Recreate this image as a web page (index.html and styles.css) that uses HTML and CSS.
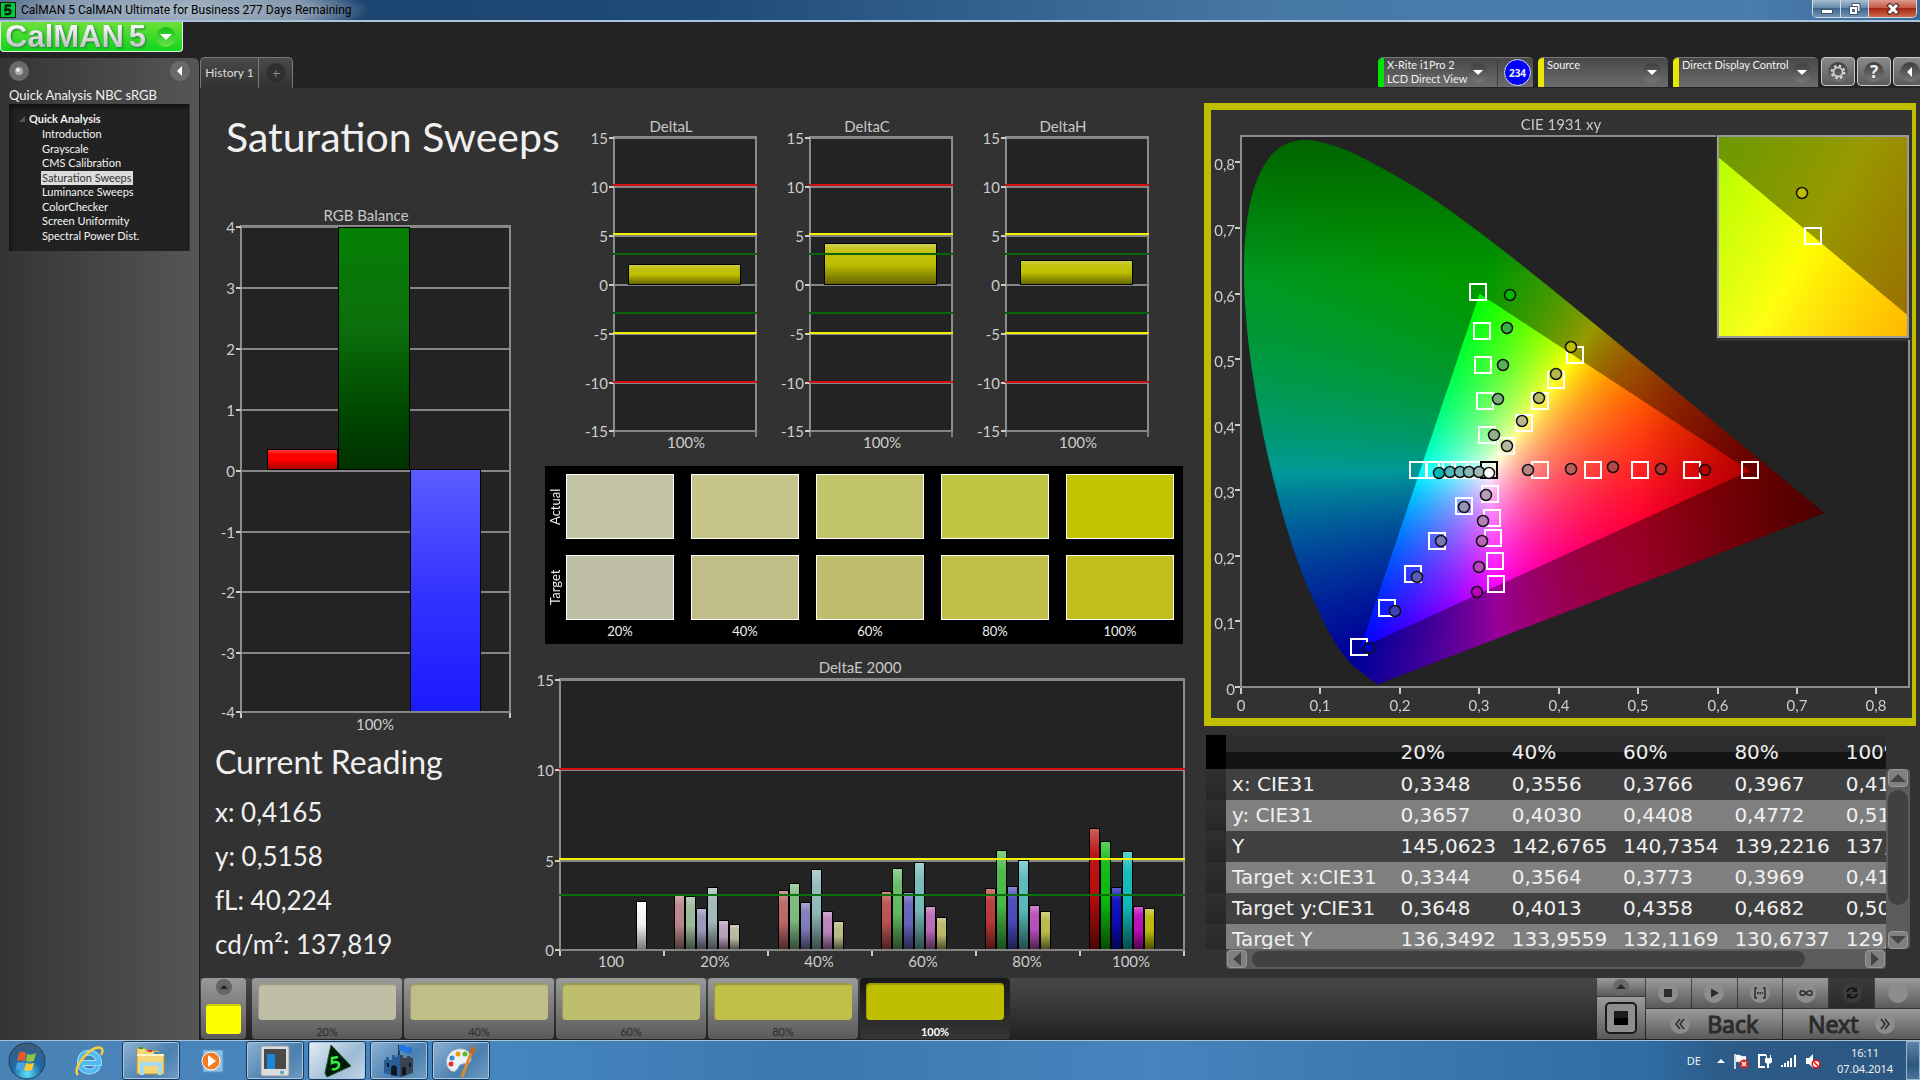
FILE: index.html
```html
<!DOCTYPE html>
<html lang="en">
<head>
<meta charset="utf-8">
<title>CalMAN 5 CalMAN Ultimate for Business</title>
<link rel="stylesheet" href="styles.css">
</head>
<body>
<header class="titlebar">
  <svg class="app-icon" viewBox="0 0 16 16"><rect width="16" height="16" fill="#021"/><rect x="1" y="1" width="14" height="14" fill="#0c3"/><path d="M11 3.500H6L5.500 8C8 6.800 10.700 7.800 10.500 10S7 13 4.800 11.500" fill="none" stroke="#021" stroke-width="2.500"/></svg>
  <span class="title-text">CalMAN 5 CalMAN Ultimate for Business 277 Days Remaining</span>
  <div class="win-buttons">
    <button class="win" aria-label="Minimize"><svg width="14" height="12"><rect x="1.500" y="6.500" width="11" height="4" fill="#fff" stroke="#456"/></svg></button>
    <button class="win" aria-label="Restore"><svg width="14" height="14"><path d="M4 1.500h8v8h-8z" fill="#fff" stroke="#456"/><path d="M1.500 4.500h8v8h-8z" fill="#fff" stroke="#456"/><path d="M4.500 7.500h2v2h-2z" fill="#68a" stroke="#456"/></svg></button>
    <button class="win close" aria-label="Close"><svg width="14" height="12"><path d="M2 1l10 10M12 1L2 11" stroke="#533" stroke-width="5"/><path d="M3 2l8 8M11 2l-8 8" stroke="#fff" stroke-width="3"/></svg></button>
  </div>
</header>

<div class="brand">
  <button class="logo"><span class="logo-text">CalMAN</span><span class="logo-text">5</span><span class="logo-drop"><svg width="12" height="6"><path d="M0 0h12L6 6z" fill="#fff"/></svg></span></button>
</div>

<div class="workspace">
  <aside class="sidebar">
    <div class="side-top">
      <button class="knob" aria-label="Options"><svg width="20" height="20"><circle cx="10" cy="10" r="4" fill="#aaa"/><circle cx="9" cy="9" r="2" fill="#eee"/></svg></button>
      <button class="knob" aria-label="Collapse"><svg width="20" height="20"><path d="M12 5v10L7 10z" fill="#fff"/></svg></button>
    </div>
    <div class="flow-name">Quick Analysis NBC sRGB</div>
    <nav class="tree">
      <div class="tree-head"><svg width="6" height="6"><path d="M6 0v6H0z" fill="#555"/></svg><b>Quick Analysis</b></div>
      <ul>
        <li><a href="#">Introduction</a></li>
        <li><a href="#">Grayscale</a></li>
        <li><a href="#">CMS Calibration</a></li>
        <li><a href="#" class="selected">Saturation Sweeps</a></li>
        <li><a href="#">Luminance Sweeps</a></li>
        <li><a href="#">ColorChecker</a></li>
        <li><a href="#">Screen Uniformity</a></li>
        <li><a href="#">Spectral Power Dist.</a></li>
      </ul>
    </nav>
  </aside>

  <main class="main">
    <div class="tabrow">
      <div class="tabs">
        <button class="tab">History 1</button>
        <button class="tab add" aria-label="Add tab"><svg width="20" height="20"><circle cx="10" cy="10" r="10" fill="#303030"/><path d="M10 7v7M7 10.500h7" stroke="#888"/></svg></button>
      </div>
      <div class="devices">
        <button class="device meter"><span class="strip green"></span><span class="device-name">X-Rite i1Pro 2<br>LCD Direct View</span><span class="drop"><svg width="10" height="5"><path d="M0 0h10L5 5z" fill="#fff"/></svg></span><span class="sep"></span><span class="badge">234</span></button>
        <button class="device source"><span class="strip"></span><span class="device-name">Source</span><span class="drop"><svg width="10" height="5"><path d="M0 0h10L5 5z" fill="#fff"/></svg></span></button>
        <button class="device display"><span class="strip"></span><span class="device-name">Direct Display Control</span><span class="drop"><svg width="10" height="5"><path d="M0 0h10L5 5z" fill="#fff"/></svg></span></button>
        <div class="tools">
          <button class="tool" aria-label="Settings"><span class="drop"><svg width="16" height="16" viewBox="0 0 16 16"><circle cx="8" cy="8" r="4.500" fill="none" stroke="#ddd" stroke-width="1.500"/><circle cx="8" cy="8" r="6.300" fill="none" stroke="#ddd" stroke-width="2" stroke-dasharray="2.500 2.450"/></svg></span></button>
          <button class="tool" aria-label="Help"><span class="drop help">?</span></button>
          <button class="tool" aria-label="Collapse panel"><span class="drop"><svg width="10" height="10"><path d="M7 0v10L2 5z" fill="#fff"/></svg></span></button>
        </div>
      </div>
    </div>

    <div class="board">
      <section class="col left">
        <h1>Saturation Sweeps</h1>
        <svg class="chart" id="rgb" viewBox="200 196 336 544"></svg>
        <div class="reading">
          <h2>Current Reading</h2>
          <p>x: 0,4165</p>
          <p>y: 0,5158</p>
          <p>fL: 40,224</p>
          <p>cd/m²: 137,819</p>
        </div>
      </section>

      <section class="col center">
        <div class="deltas">
          <svg class="chart" id="deltaL" viewBox="577 112 196 346"></svg>
          <svg class="chart" id="deltaC" viewBox="577 112 196 346"></svg>
          <svg class="chart" id="deltaH" viewBox="577 112 196 346"></svg>
        </div>
        <div class="compare">
          <div class="sides"><span>Actual</span><span>Target</span></div>
          <div class="swatches">
            <i class="a20"></i><i class="a40"></i><i class="a60"></i><i class="a80"></i><i class="a100"></i>
            <i class="t20"></i><i class="t40"></i><i class="t60"></i><i class="t80"></i><i class="t100"></i>
          </div>
          <div class="percents"><span>20%</span><span>40%</span><span>60%</span><span>80%</span><span>100%</span></div>
        </div>
        <svg class="chart" id="deltaE" viewBox="536 655 664 320"></svg>
      </section>

      <section class="col right">
        <div class="cie">
          <canvas id="gamut" width="1402" height="1216"></canvas>
          <svg class="chart" id="cie" viewBox="1211 110 701 608"></svg>
        </div>
        <div class="grid-view">
          <div class="table-clip">
            <table>
              <thead><tr><th class="handle"></th><th class="label"></th><th>20%</th><th>40%</th><th>60%</th><th>80%</th><th>100%</th></tr></thead>
              <tbody>
                <tr><td class="handle"></td><th class="label">x: CIE31</th><td>0,3348</td><td>0,3556</td><td>0,3766</td><td>0,3967</td><td>0,4165</td></tr>
                <tr><td class="handle"></td><th class="label">y: CIE31</th><td>0,3657</td><td>0,4030</td><td>0,4408</td><td>0,4772</td><td>0,5158</td></tr>
                <tr><td class="handle"></td><th class="label">Y</th><td>145,0623</td><td>142,6765</td><td>140,7354</td><td>139,2216</td><td>137,8190</td></tr>
                <tr><td class="handle"></td><th class="label">Target x:CIE31</th><td>0,3344</td><td>0,3564</td><td>0,3773</td><td>0,3969</td><td>0,4193</td></tr>
                <tr><td class="handle"></td><th class="label">Target y:CIE31</th><td>0,3648</td><td>0,4013</td><td>0,4358</td><td>0,4682</td><td>0,5053</td></tr>
                <tr><td class="handle"></td><th class="label">Target Y</th><td>136,3492</td><td>133,9559</td><td>132,1169</td><td>130,6737</td><td>129,5014</td></tr>
              </tbody>
            </table>
          </div>
          <div class="vbar">
            <button aria-label="Scroll up"><svg width="16" height="8"><path d="M8 0l8 8H0z" fill="#444"/></svg></button>
            <span class="vthumb"></span>
            <button aria-label="Scroll down"><svg width="16" height="8"><path d="M0 0h16L8 8z" fill="#444"/></svg></button>
          </div>
          <div class="hbar">
            <button aria-label="Scroll left"><svg width="8" height="14"><path d="M8 0v14L0 7z" fill="#444"/></svg></button>
            <span class="hthumb"></span>
            <button aria-label="Scroll right"><svg width="8" height="14"><path d="M0 0v14l8-7z" fill="#444"/></svg></button>
          </div>
        </div>
      </section>
    </div>

    <div class="dock">
      <button class="pattern" aria-label="Pattern colour"><svg width="16" height="16"><circle cx="8" cy="8" r="8" fill="#666"/><path d="M4 10h8L8 6z" fill="#222"/></svg><i></i></button>
      <div class="levels">
        <button class="level"><i class="t20"></i>20%</button>
        <button class="level"><i class="t40"></i>40%</button>
        <button class="level"><i class="t60"></i>60%</button>
        <button class="level"><i class="t80"></i>80%</button>
        <button class="level active"><i class="b100"></i>100%</button>
      </div>
      <div class="stack">
        <button aria-label="Expand"><svg width="16" height="16"><circle cx="8" cy="8" r="8" fill="#6a6a6a"/><path d="M3 10h10L8 5z" fill="#2b2b2b"/></svg></button>
        <button aria-label="Pattern window"><svg width="32" height="32"><rect x="1" y="1" width="30" height="30" rx="4" fill="#8e8e8e" stroke="#1a1a1a" stroke-width="2"/><rect x="9" y="9" width="14" height="7" fill="#1c1c1c"/><rect x="9" y="16" width="14" height="7"/></svg></button>
      </div>
      <div class="controls">
        <button aria-label="Stop"><svg width="20" height="20"><circle cx="10" cy="10" r="10" fill="#8d8d8d"/><path d="M6 6h8v8H6z" fill="#2b2b2b"/></svg></button>
        <button aria-label="Play"><svg width="20" height="20"><circle cx="10" cy="10" r="10" fill="#8d8d8d"/><path d="M7 5.500v9l8-4.500z" fill="#2b2b2b"/></svg></button>
        <button aria-label="Read range"><svg width="20" height="20"><circle cx="10" cy="10" r="10" fill="#8d8d8d"/><path d="M7 5H5v10h2M13 5h2v10h-2" fill="none" stroke="#2b2b2b" stroke-width="1.500"/><path d="M7 10h6" stroke="#2b2b2b" stroke-width="2" stroke-dasharray="1.500 1"/></svg></button>
        <button aria-label="Continuous"><svg width="20" height="20"><circle cx="10" cy="10" r="10" fill="#8d8d8d"/><path d="M10 10c-2-3-6-3-6 0s4 3 6 0 6-3 6 0-4 3-6 0z" fill="none" stroke="#2b2b2b" stroke-width="1.500"/></svg></button>
        <button class="dark" aria-label="Refresh"><svg width="20" height="20"><circle cx="10" cy="10" r="10" fill="#3c3c3c"/><path d="M5 9c1-4 6-5 9-2M15 11c-1 4-6 5-9 2" fill="none" stroke="#161616" stroke-width="2"/><path d="M15 4v5h-5zM5 16v-5h5z" fill="#161616"/></svg></button>
        <button aria-label="Record"><svg width="20" height="20"><circle cx="10" cy="10" r="10" fill="#8d8d8d"/></svg></button>
        <button class="wide"><svg width="20" height="20"><circle cx="10" cy="10" r="10" fill="#8d8d8d"/><path d="M10 5l-4 5 4 5M14 5l-4 5 4 5" fill="none" stroke="#2b2b2b" stroke-width="1.500"/></svg>Back</button>
        <button class="wide">Next<svg width="20" height="20"><circle cx="10" cy="10" r="10" fill="#8d8d8d"/><path d="M6 5l4 5-4 5M10 5l4 5-4 5" fill="none" stroke="#2b2b2b" stroke-width="1.500"/></svg></button>
      </div>
    </div>
  </main>
</div>

<footer class="taskbar">
  <button class="orb" aria-label="Start"><svg width="38" height="38" viewBox="0 0 38 38"><defs><radialGradient id="orb" cx=".5" cy=".85" r=".8"><stop offset="0" stop-color="#5fe0ff"/><stop offset=".5" stop-color="#1b6aa5"/><stop offset="1" stop-color="#3c5c7c"/></radialGradient></defs><circle cx="19" cy="19" r="18" fill="url(#orb)" stroke="#1d3d5c"/><path d="M11 11c3-2 5-1 7 0l-1 8c-3-1-5-1-8 0z" fill="#e9582b"/><path d="M19 12c3 1 5 1 9-1l-2 8c-3 1-5 1-8 0z" fill="#8cc63f"/><path d="M9 21c3-1 5-1 8 0l-2 7c-2-1-4-1-7 0z" fill="#4aa5e8"/><path d="M18 21c3 1 5 1 8 0l-2 7c-3 1-5 1-8 0z" fill="#fdc92e"/></svg></button>
  <button class="task" aria-label="Internet Explorer"><svg width="32" height="32" viewBox="0 0 32 32"><path d="M25 21c-3 8-18 8-18-4 0-13 19-12 19 1H9" fill="none" stroke="#9fe0fc" stroke-width="6"/><path d="M25 21c-3 8-18 8-18-4 0-13 19-12 19 1H9" fill="none" stroke="#4fb9f0" stroke-width="4"/><path d="M5 30C-2 24 18-1 28 3c2 1 2 4 0 7" fill="none" stroke="#f8cd3c" stroke-width="2.500"/></svg></button>
  <button class="task open" aria-label="Explorer"><svg width="34" height="34" viewBox="0 0 34 34"><path d="M3 4h8l2 3h12v4h5v19H3z" fill="#f3d77a" stroke="#b99738"/><path d="M3 11h27" stroke="#fff3c0" stroke-width="2"/><path d="M5 3h4v2H5z" fill="#2b9c3c"/><path d="M14 6h4v2h-4z" fill="#d33"/><path d="M20 8h5v2h-5z" fill="#38c"/><path d="M8 31V20h18v11" fill="none" stroke="#a5daf2" stroke-width="4"/></svg></button>
  <button class="task" aria-label="Media Player"><svg width="28" height="28" viewBox="0 0 28 28"><path d="M4 3h20v22H4z" fill="#8fc1e8" stroke="#5b94c5"/><circle cx="12" cy="14" r="9" fill="#f57a20" stroke="#fff"/><path d="M9 8v12l8-6z" fill="#fff"/></svg></button>
  <button class="task open" aria-label="Monitor tool"><svg width="32" height="32" viewBox="0 0 32 32"><rect x="2" y="1" width="28" height="30" rx="2" fill="#ddd" stroke="#999"/><path d="M5 4h22v20H5z" fill="#4a4a4a"/><path d="M8 9h8v15H8z" fill="#1a87d8"/><circle cx="23" cy="27.500" r="2" fill="#5ac"/></svg></button>
  <button class="task open current" aria-label="CalMAN"><svg width="34" height="34" viewBox="0 0 34 34"><path d="M11 1l20 21L7 33 5 29z" fill="#031a06" stroke="#1c5b24"/><path d="M18 13l-6 1v5c4-2 7-1 7 2s-4 5-7 4" fill="none" stroke="#2cf53c" stroke-width="2.500"/></svg></button>
  <button class="task open" aria-label="Castle"><svg width="34" height="34" viewBox="0 0 34 34"><path d="M2 16h2v-3h3v3h3v-5h3v2h2v-2h3v5h8v-3h3v3h2v12l-14 5-15-4z" fill="#2a5d96"/><path d="M18 11h3v3h4v-2h3v2h3v15l-13 4z" fill="#3a4450"/><path d="M17 11V1" stroke="#222" stroke-width="1.500"/><path d="M17 1h6l1 2h6v6h-7l-1-2h-5z" fill="#1f74e0"/><path d="M9 31v-6c0-5 6-5 6 0v7zM20 32v-6c0-4 4-5 4 0v5zM5 19h2v4H5zM27 19h2v4h-2z" fill="#0b1626"/></svg></button>
  <button class="task open" aria-label="Paint"><svg width="34" height="34" viewBox="0 0 34 34"><path d="M14 5C4 6-1 18 5 25c5 6 9 0 10-3 2-4 12 0 12-7S22 4 14 5z" fill="#e9f0f6" stroke="#9ab"/><circle cx="8" cy="14" r="2.500" fill="#48c"/><circle cx="14" cy="10" r="2.500" fill="#e90"/><circle cx="21" cy="10" r="2.500" fill="#5b3"/><circle cx="7" cy="20" r="2.500" fill="#d33"/><path d="M18 33L27 9" stroke="#e08a2c" stroke-width="3"/><path d="M25 9l2-7 5 2-2 7z" fill="#b5703a"/></svg></button>
  <div class="tray">
    <span class="lang">DE</span>
    <svg width="8" height="4"><path d="M0 4l4-4 4 4z" fill="#fff"/></svg>
    <svg width="16" height="16" viewBox="0 0 16 16"><path d="M2 1v15" stroke="#fff" stroke-width="1.500"/><path d="M3 2c4-1 5 2 10 1v7c-5 1-6-2-10-1z" fill="#fff"/><circle cx="11" cy="11" r="4.500" fill="#d22"/><path d="M9 9l4 4M13 9l-4 4" stroke="#fff" stroke-width="1.500"/></svg>
    <svg width="16" height="16" viewBox="0 0 16 16"><path d="M8 14H2V2h7" fill="none" stroke="#fff" stroke-width="2"/><path d="M8 5h7v4c0 2-7 2-7 0zM9 2h1v3H9zM13 2h1v3h-1z" fill="#fff"/><path d="M11 9v6" stroke="#fff" stroke-width="2"/></svg>
    <svg width="16" height="16" viewBox="0 0 16 16"><path d="M0 12h2v2H0zM3 10h2v4H3zM6 8h2v6H6zM9 5h2v9H9zM13 2h2v12h-2z" fill="#fff"/></svg>
    <svg width="16" height="16" viewBox="0 0 16 16"><path d="M1 5h3l4-4v14l-4-4H1z" fill="#fff"/><circle cx="11" cy="11" r="3.800" fill="#fff" stroke="#e11" stroke-width="1.500"/><path d="M8 8l6 6" stroke="#e11" stroke-width="1.500"/></svg>
    <time class="clock">16:11<br>07.04.2014</time>
    <button class="peek" aria-label="Show desktop"></button>
  </div>
</footer>
<script src="charts.js"></script>
</body>
</html>
```
FILE: styles.css
```css
* { box-sizing: border-box; }
html, body { margin: 0; height: 100%; }
body {
  display: flex; flex-direction: column;
  min-height: 100vh;
  background: #232323; color: #f0f0f0;
  font: 13px/14px Lato, "Open Sans", sans-serif;
  overflow: hidden;
}
button { margin: 0; padding: 0; border: 0; background: none; color: inherit; font: inherit; }
svg { display: block; flex: none; }
i { display: block; }

.titlebar {
  display: flex; align-items: center; gap: 5px; flex: none;
  height: 22px;
  border-bottom: 2px solid #a9c3da;
  background: radial-gradient(ellipse 190px 30px at 180px 10px, #a9b8c8 0%, #8497ad 70%, transparent 100%), linear-gradient(90deg, #56708c 0, #1c4470 370px, #1f4a78 700px, #487aa8 1300px, #4a7dac 1750px, #3a6896 100%);
}
.app-icon { width: 16px; height: 16px; }
.title-text { font: 12px/20px Roboto, "Open Sans", sans-serif; color: #000; }
.win-buttons { display: flex; align-self: flex-start; margin-left: auto; margin-right: 3px; border: 1px solid #cfdde9; border-top: 0; border-radius: 0 0 5px 5px; overflow: hidden; }
.win { display: grid; place-items: center; width: 28px; height: 17px; background: linear-gradient(#a8bfd4, #5f83a6 50%, #3f678f 50%, #6f94b5); border-right: 1px solid #cfdde9; }
.win.close { width: 47px; border: 0; background: linear-gradient(#dd9a8e, #c4523c 50%, #a52712 50%, #cf6a4c); }

.brand { height: 35px; flex: none; }
.logo {
  display: flex; align-items: center; gap: 5px;
  width: 183px; height: 30px; padding: 0 6px 0 4px;
  border: 1px solid #e8ffe8; border-top: 0; border-radius: 0 0 4px 4px;
  background: linear-gradient(#6fe03a, #0fd41a);
}
.logo-text { font: bold 31px/28px "Liberation Sans", sans-serif; color: transparent; background: linear-gradient(#fff, #b8b8b8); background-clip: text; filter: drop-shadow(1px 1px 1px #274); }
.logo-drop { display: grid; place-items: center; width: 20px; height: 20px; margin-left: auto; border-radius: 50%; background: linear-gradient(#12c01c, #6be24a); }

.workspace { display: flex; flex: 1; min-height: 0; }
.sidebar { width: 200px; flex: none; padding: 3px 9px 0; background: linear-gradient(90deg, #343434, #565656); border-radius: 0 6px 0 0; border-right: 1px solid #1c1c1c; margin-top: 1px; }
.side-top { display: flex; justify-content: space-between; }
.knob { width: 20px; height: 20px; border-radius: 50%; background: #6a6a6a; }
.flow-name { margin: 6px 0 0; line-height: 17px; font-size: 13px; white-space: nowrap; }
.tree { height: 147px; padding: 7px 10px; background: #222; box-shadow: inset 2px 3px 4px #111; font-size: 11px; border-right: 1px solid #333; }
.tree-head { display: flex; align-items: center; gap: 4px; line-height: 16px; }
.tree ul { display: grid; grid-template-rows: repeat(8, 1fr); height: 116px; margin: 0; padding: 0 0 0 22px; list-style: none; }
.tree li { display: flex; align-items: center; }
.tree a { color: #f4f4f4; text-decoration: none; padding: 0 1px; white-space: nowrap; }
.tree a.selected { background: #dcdcdc; color: #333; }

.main { display: flex; flex-direction: column; flex: 1; min-width: 0; }
.tabrow { display: flex; justify-content: space-between; height: 31px; flex: none; overflow: hidden; }
.tabs { display: flex; border: 1px solid #7a7a7a; border-bottom: 0; border-radius: 5px 5px 0 0; background: linear-gradient(#4a4a4a, #323232); }
.tab { width: 58px; height: 30px; text-align: center; color: #ddd; font-size: 12px; border-right: 1px solid #7a7a7a; white-space: nowrap; }
.tab.add { display: grid; place-items: center; width: 33px; border: 0; }
.devices { display: flex; gap: 5px; }
.device { display: flex; align-items: center; height: 30px; border-radius: 5px 5px 0 0; background: linear-gradient(#484848, #6c6c6c); border-top: 1px solid #777; overflow: hidden; font-size: 11px; text-align: left; }
.meter { width: 155px; }
.source { width: 130px; }
.display { width: 145px; }
.strip { align-self: stretch; width: 6px; margin-right: 3px; background: #e8e800; flex: none; }
.strip.green { background: #00e600; }
.device-name { align-self: flex-start; flex: 1; white-space: nowrap; }
.drop { display: grid; place-items: center; width: 20px; height: 20px; margin-right: 6px; border-radius: 50%; background: linear-gradient(#3e3e3e, #777); flex: none; }
.display .device-name { width: 0; }
.meter .drop { margin-right: 9px; }
.sep { width: 1px; height: 26px; background: #3a3a3a; }
.badge { display: grid; place-items: center; width: 27px; height: 27px; margin: 0 2px 0 6px; border: 1px solid #ddd; border-radius: 50%; background: #00f; font: bold 10px/12px "Noto Sans", sans-serif; flex: none; }
.tools { display: flex; gap: 2px; margin-right: -7px; margin-left: -2px; }
.tool { display: grid; place-items: center; width: 34px; height: 29px; border: 1px solid #c8c8c8; border-radius: 4px; background: linear-gradient(#8a8a8a, #5a5a5a); }
.tool .drop { margin: 0; }
.help { font: bold 17px/20px "Noto Sans", sans-serif; }

.board { display: grid; grid-template-columns: 336fr 664fr 720fr; flex: 1; min-height: 0; background: #323232; }
.col { min-width: 0; }
.chart { width: 100%; height: auto; }
h1 { margin: 0 0 0 26px; padding-top: 19px; height: 108px; font-size: 41px; line-height: 60px; font-weight: 400; white-space: nowrap; }
h2 { margin: 0 0 6px; font-size: 32px; line-height: 44px; font-weight: 400; }
.reading { padding-left: 15px; font-size: 26px; line-height: 44px; }
.reading p { margin: 0; }

.deltas { display: grid; grid-template-columns: repeat(3, 1fr); padding: 24px 35px 0 41px; }
.compare {
  display: grid; grid-template-columns: 18px 1fr; grid-template-rows: 146px 1fr;
  margin: 8px 17px 0 9px; padding: 8px 9px 0 3px; height: 178px;
  background: #000; text-align: center;
}
.sides { display: grid; grid-template-rows: 65px 65px; gap: 16px; }
.sides span { writing-mode: vertical-rl; transform: rotate(180deg); }
.swatches { display: grid; grid-template-columns: repeat(5, 1fr); grid-template-rows: 65px 65px; gap: 16px 17px; }
.swatches i { border: 1px solid #fff; }
.percents { display: grid; grid-template-columns: repeat(5, 1fr); column-gap: 17px; grid-column: 2; padding-top: 4px; }
.a20 { background: #c4c4a6; } .a40 { background: #c5c48a; } .a60 { background: #c2c46c; } .a80 { background: #c0c544; } .a100 { background: #c2c500; }
.t20 { background: #bfbfa6; } .t40 { background: #bfbe86; } .t60 { background: #bfbe6c; } .t80 { background: #bfbf4a; } .t100 { background: #c0bf1c; }
.b100 { background: #bfbf00; }
#deltaE { margin-top: 11px; }

.cie { display: grid; margin: 15px 4px 0; border: solid #bfbf00; border-width: 7px 4px 8px 7px; }
.cie > * { grid-area: 1 / 1; width: 100%; height: auto; }
.axis { font: 15px Lato, sans-serif; fill: #cdcdcd; }
.heading { font: 15px Lato, sans-serif; fill: #c8c8c8; }

.grid-view { display: grid; grid-template-columns: 1fr 24px; grid-template-rows: 214px 20px; margin: 9px 10px 0 6px; }
.table-clip { overflow: hidden; }
table { width: 745px; table-layout: fixed; border-collapse: collapse; font: 20px/31px "DejaVu Sans", sans-serif; }
th { text-align: left; font-weight: 400; }
th, td { padding: 0 0 0 6px; width: 111px; height: 31px; white-space: nowrap; }
th.label { width: 168px; }
thead th { height: 34px; background: linear-gradient(#2d2d2d 50%, #141414 50%); }
tbody tr { background: #404040; }
tbody tr:nth-child(even) { background: #7f7f7f; }
.handle { width: 20px; padding: 0; background: linear-gradient(#303030, #262626); }
thead .handle { background: #000; }
.vbar { display: flex; flex-direction: column; margin-top: 34px; background: #5c5c5c; border-radius: 4px; align-items: center; }
.vbar button, .hbar button { display: grid; place-items: center; width: 20px; height: 18px; border: 1px solid #999; border-radius: 4px; background: #808080; flex: none; }
.vthumb { width: 20px; height: 115px; margin: 3px 0 auto; border-radius: 10px; background: #414141; }
.hbar { display: flex; align-items: center; margin-left: 20px; padding: 0 1px; background: #5c5c5c; border-radius: 4px; }
.hthumb { width: 84%; height: 16px; margin: 0 auto 0 5px; border-radius: 8px; background: #414141; }

.dock { display: flex; flex: none; height: 62px; padding: 0 0 1px 1px; background: linear-gradient(#484848, #222); }
.dock button { background: linear-gradient(#9a9a9a, #5a5a5a); }
.pattern { display: flex; flex-direction: column; align-items: center; justify-content: space-between; width: 45px; padding: 1px 0 5px; border-radius: 4px; }
.pattern i { width: 35px; height: 30px; border-radius: 3px; background: #ff0; border-top: 2px solid #cc0; }
.levels { display: flex; gap: 2px; margin-left: 6px; flex: none; }
.level { display: flex; flex-direction: column; width: 150px; padding: 5px 6px 0; gap: 4px; border-radius: 4px; color: #2b2b2b; font-size: 11px; line-height: 16px; text-align: center; }
.level i { width: 100%; height: 37px; border-radius: 4px; box-shadow: inset 1px 2px 1px #0003; flex: none; }
.dock .level.active { background: linear-gradient(#181818, #363636); color: #fff; font-weight: bold; }
.stack { display: grid; grid-template-rows: 18px 1fr; gap: 1px; width: 48px; margin-left: auto; }
.stack button, .controls button { display: grid; place-items: center; }
.controls { display: grid; grid-template-columns: repeat(6, 1fr); grid-template-rows: 30px 1fr; gap: 1px; width: 274px; margin-left: 1px; }
.dock .controls .dark { background: linear-gradient(#3a3a3a, #2a2a2a); }
.controls .wide { grid-column: span 3; display: flex; align-items: center; justify-content: center; gap: 17px; font: 23px/30px "Noto Sans", sans-serif; color: #2b2b2b; -webkit-text-stroke: 1px #2b2b2b; }

.taskbar { display: flex; gap: 4px; flex: none; height: 40px; border-top: 1px solid #a9c3da; padding-left: 8px; background: linear-gradient(90deg, #4a82b6, #4586bf 500px, #3c78b0 800px, #4684bd 1150px, #2f6ca3 1650px, #2d5c88 1720px, #2b5680 100%); }
.orb { width: 48px; text-align: left; }
.task { display: grid; place-items: center; width: 58px; border-radius: 3px; }
.task.open { border: 1px solid #16385a; box-shadow: inset 0 0 0 1px #a8c6e0; background: linear-gradient(135deg, #8fb3d3, #4a7faf 60%, #6f9dc4); }
.task.current { background: linear-gradient(135deg, #e6eef6, #9dbbd6 60%, #c4d6e6); }
.tray { display: flex; align-items: center; gap: 8px; margin-left: auto; font: 11px/16px "Noto Sans", sans-serif; }
.lang { margin-right: 8px; }
.clock { margin-left: 3px; width: 66px; text-align: center; }
.peek { align-self: stretch; width: 14px; border: 1px solid #9cb6cd; background: linear-gradient(#5c86ab, #2c577f 60%, #4a769d); }
```
FILE: charts.js
```js
const NS = 'http://www.w3.org/2000/svg';

function add(parent, tag, attrs, text) {
  const el = document.createElementNS(NS, tag);
  for (const k in attrs) el.setAttribute(k, attrs[k]);
  if (text !== undefined) el.textContent = text;
  parent.appendChild(el);
  return el;
}
function line(svg, x1, y1, x2, y2, stroke, width) {
  add(svg, 'line', { x1, y1, x2, y2, stroke, 'stroke-width': width || 1 });
}
function label(svg, x, y, text, anchor, cls) {
  add(svg, 'text', { x, y, 'text-anchor': anchor, class: cls || 'axis' }, text);
}
let gradients = 0;
function shaded(svg, stops) {
  const id = 'g' + (++gradients);
  const g = add(svg, 'linearGradient', { id, x1: 0, y1: 0, x2: 0, y2: 1 });
  stops.forEach(([offset, color]) => add(g, 'stop', { offset, 'stop-color': color }));
  return `url(#${id})`;
}
function mix(hex, other, t) {
  const p = h => [1, 3, 5].map(i => parseInt(h.slice(i, i + 2), 16));
  const a = p(hex), b = p(other);
  return `rgb(${a.map((v, i) => Math.round(v + (b[i] - v) * t)).join(',')})`;
}
function gloss(svg, color) {
  return shaded(svg, [[0, mix(color, '#ffffff', .35)], [.2, mix(color, '#ffffff', .05)], [.55, color], [1, mix(color, '#000000', .6)]]);
}
function bar(svg, x, y, w, h, fill) {
  add(svg, 'rect', { x: x + .5, y: y + .5, width: w - 1, height: h - 1, fill, stroke: '#000', 'stroke-width': 1 });
}
function frame(svg, x0, y0, x1, y1, ticks) {
  add(svg, 'rect', { x: x0, y: y0, width: x1 - x0, height: y1 - y0, fill: '#232323', stroke: '#8c8c8c', 'stroke-width': 2 });
  ticks.forEach(([text, y]) => {
    line(svg, x0, y, x1, y, '#858585', 2);
    line(svg, x0 - 5, y, x0, y, '#ccc', 2);
    label(svg, x0 - 6, y + 6, text, 'end');
  });
}

const rgb = document.getElementById('rgb');
frame(rgb, 241, 226, 510, 712, [4, 3, 2, 1, 0, -1, -2, -3, -4].map((v, i) => [v, Math.min(712, 227 + Math.round(i * 60.9))]));
label(rgb, 366, 221, 'RGB Balance', 'middle', 'heading');
bar(rgb, 267, 449, 71, 21, shaded(rgb, [[0, '#f44'], [.25, '#f00'], [.5, '#f00'], [1, '#a00']]));
bar(rgb, 338, 227, 72, 243, shaded(rgb, [[0, '#058005'], [.4, '#0c700c'], [.75, '#004a00'], [1, '#003000']]));
bar(rgb, 410, 469, 71, 243, shaded(rgb, [[0, '#5c5cff'], [.5, '#3434ff'], [1, '#1a1aff']]));
line(rgb, 241, 712, 510, 712, '#858585', 2);
[241, 510].forEach(x => line(rgb, x, 713, x, 718, '#ccc', 2));
label(rgb, 375, 730, '100%', 'middle');

[['deltaL', 'DeltaL', 264], ['deltaC', 'DeltaC', 243], ['deltaH', 'DeltaH', 260]].forEach(([id, title, top]) => {
  const svg = document.getElementById(id);
  frame(svg, 614, 137, 756, 431, [15, 10, 5, 0, -5, -10, -15].map((v, i) => [v, Math.min(431, 138 + i * 49)]));
  label(svg, 671, 132, title, 'middle', 'heading');
  bar(svg, 628, top, 113, 285 - top, shaded(svg, [[0, '#d0d050'], [.2, '#c2c210'], [.5, '#bfbf00'], [1, '#626200']]));
  [[185, '#d01212'], [254, '#0b640b'], [313, '#0b640b'], [382, '#d01212']].forEach(([y, c]) => line(svg, 613, y, 757, y, c, 2));
  [234, 333].forEach(y => line(svg, 613, y, 757, y, '#f0f000', 2));
  [614, 756].forEach(x => line(svg, x, 432, x, 437, '#ccc', 1));
  label(svg, 686, 448, '100%', 'middle');
});

const dE = document.getElementById('deltaE');
frame(dE, 560, 679, 1184, 950, [[15, 680], [10, 770], [5, 861], [0, 950]]);
label(dE, 860, 673, 'DeltaE 2000', 'middle', 'heading');
bar(dE, 636, 901, 11, 49, shaded(dE, [[0, '#fff'], [.5, '#eee'], [1, '#777']]));
const groups = [
  [674, [894, 896, 908, 887, 920, 924], ['#b88686', '#98b896', '#9696b8', '#a2b8b8', '#b8a0b8', '#b8b8a0']],
  [778, [890, 883, 902, 869, 911, 921], ['#b86666', '#7cb87c', '#7c7cb8', '#8eb8b8', '#b882b8', '#b8b882']],
  [881, [891, 868, 892, 862, 906, 917], ['#b85050', '#62b862', '#6262b8', '#76b8b8', '#b868b8', '#b8b868']],
  [985, [888, 850, 886, 860, 905, 911], ['#b83838', '#48b848', '#4848b8', '#58b8b8', '#b84cb8', '#b8b84c']],
  [1089, [828, 841, 887, 851, 906, 908], ['#b80c0c', '#0cb80c', '#0c0cb8', '#10b8b8', '#b80cb8', '#b8b80c']]
];
groups.forEach(([x, tops, colors]) => tops.forEach((t, i) => bar(dE, x + i * 11, t, 11, 950 - t, gloss(dE, colors[i]))));
line(dE, 560, 950, 1184, 950, '#858585', 2);
line(dE, 559, 769, 1185, 769, '#d01212', 2);
line(dE, 559, 859, 1185, 859, '#f0f000', 2);
line(dE, 559, 895, 1185, 895, '#0b700b', 2);
for (let i = 0; i < 7; i++) line(dE, 560 + i * 104, 951, 560 + i * 104, 956, '#ccc', 2);
['100', '20%', '40%', '60%', '80%', '100%'].forEach((t, i) => label(dE, 611 + i * 104, 967, t, 'middle'));

/* Chromaticity diagram: x and y axes in panel units, drawn at twice the size. */
const OX = 1241, OY = 687, SX = 794.3, SY = 655.8;
const locus = [[.1741, .005], [.1714, .0051], [.1644, .0109], [.1566, .0177], [.144, .0297], [.1355, .0399], [.1241, .0578], [.1096, .0868], [.0913, .1327], [.0687, .2007], [.0454, .295], [.0235, .4127], [.0082, .5384], [.0039, .6548], [.0139, .7502], [.0389, .812], [.0743, .8338], [.1142, .8262], [.1547, .8059], [.2296, .7543], [.3016, .6923], [.3731, .6245], [.4441, .5547], [.5125, .4866], [.5752, .4242], [.627, .3725], [.6658, .334], [.6915, .3083], [.719, .2809], [.7347, .2653]];
function inside(x, y) {
  const R = [.64, .33], G = [.3, .6], B = [.15, .06];
  const s = (a, b) => (b[0] - a[0]) * (y - a[1]) - (b[1] - a[1]) * (x - a[0]);
  return s(R, G) >= 0 && s(G, B) >= 0 && s(B, R) >= 0;
}
function colour(x, y) {
  y = Math.max(y, .001);
  const X = x / y, Z = (1 - x - y) / y;
  let c = [3.2406 * X - 1.5372 - .4986 * Z, -.9689 * X + 1.8758 + .0415 * Z, .0557 * X - .204 + 1.057 * Z].map(v => Math.max(0, v));
  const m = Math.max(...c);
  let f = inside(x, y) ? 1 : .6;
  f *= 1 - Math.max(0, x - .5) * 2.2;
  f *= 1 - Math.max(0, y - .62) * 1.6;
  return c.map(v => 255 * f * v / m);
}
function field(w, h, toX, toY) {
  const off = document.createElement('canvas');
  off.width = w; off.height = h;
  const o = off.getContext('2d'), img = o.createImageData(w, h);
  for (let j = 0, p = 0; j < h; j++) for (let i = 0; i < w; i++, p += 4) {
    const c = colour(toX(i), toY(j));
    img.data[p] = c[0]; img.data[p + 1] = c[1]; img.data[p + 2] = c[2]; img.data[p + 3] = 255;
  }
  o.putImageData(img, 0, 0);
  return off;
}
const ctx = document.getElementById('gamut').getContext('2d');
const px = x => (OX - 1211 + x * SX) * 2, py = y => (OY - 110 - y * SY) * 2;
ctx.fillStyle = '#323232'; ctx.fillRect(0, 0, 1402, 1216);
ctx.fillStyle = '#232323'; ctx.fillRect(60, 52, 1334, 1102);
ctx.save();
ctx.beginPath();
locus.forEach((p, i) => {
  if (!i) return ctx.moveTo(px(p[0]), py(p[1]));
  const a = locus[Math.max(0, i - 2)], b = locus[i - 1], d = locus[Math.min(locus.length - 1, i + 1)];
  ctx.bezierCurveTo(px(b[0] + (p[0] - a[0]) / 6), py(b[1] + (p[1] - a[1]) / 6), px(p[0] - (d[0] - b[0]) / 6), py(p[1] - (d[1] - b[1]) / 6), px(p[0]), py(p[1]));
});
ctx.closePath();
ctx.clip();
ctx.drawImage(field(1402, 1216, i => (i / 2 + 1211 - OX) / SX, j => (OY - 110 - j / 2) / SY), 0, 0);
ctx.restore();
ctx.fillStyle = '#323232'; ctx.fillRect(1010, 50, 392, 412);
ctx.drawImage(field(380, 402, i => .4193 + (i / 2 - 95) / 3900, j => .5053 - (j / 2 - 100) / 4100), 1014, 52);

const cie = document.getElementById('cie');
label(cie, 1561, 130, 'CIE 1931 xy', 'middle', 'heading');
add(cie, 'path', { d: 'M1716 136H1241V687H1909V340', fill: 'none', stroke: '#8c8c8c', 'stroke-width': 2 });
add(cie, 'rect', { x: 1718, y: 136, width: 190, height: 201, fill: 'none', stroke: '#9a9a9a', 'stroke-width': 2 });
for (let i = 0; i <= 8; i++) {
  const x = Math.round(OX + i * SX / 10), y = Math.round(OY - i * SY / 10), t = i ? '0,' + i : '0';
  line(cie, x, 688, x, 694, '#ccc', 2);
  line(cie, 1235, y, 1240, y, '#ccc', 2);
  label(cie, x, 711, t, 'middle');
  label(cie, 1235, y + 8, t, 'end');
}
function square(x, y, stroke) {
  add(cie, 'rect', { x: Math.round(x) - 8, y: Math.round(y) - 8, width: 16, height: 16, fill: 'none', stroke: stroke || '#fff', 'stroke-width': 2 });
}
function dot(x, y, fill) {
  add(cie, 'circle', { cx: x, cy: y, r: 5.5, fill, stroke: '#111', 'stroke-width': 1.5 });
}
const sweeps = [
  [[[1478, 292], [1482, 331], [1483, 365], [1485, 401], [1487, 435]], [[1510, 295], [1507, 328], [1503, 365], [1498, 399], [1494, 435]], ['#00b800', '#38b048', '#58b058', '#78b078', '#90b090']],
  [[[1575, 355], [1556, 380], [1540, 401], [1524, 423], [1506, 446]], [[1571, 347], [1556, 374], [1539, 398], [1522, 421], [1507, 446]], ['#bfbf00', '#b8b848', '#b8b868', '#b8b886', '#b8b8a0']],
  [[[1750, 470], [1692, 470], [1640, 470], [1593, 470], [1540, 470]], [[1705, 470], [1661, 469], [1613, 467], [1571, 469], [1528, 470]], ['#b80000', '#b83030', '#b84848', '#b86060', '#b88484']],
  [[[1418, 470], [1435, 470], [1447, 470], [1460, 470], [1475, 470]], [[1439, 473], [1450, 472], [1460, 472], [1469, 472], [1479, 472]], ['#00b8b8', '#50b8b8', '#70b8b8', '#8cb8b8', '#a0b8b8']],
  [[[1359, 647], [1387, 608], [1413, 574], [1437, 541], [1464, 506]], [[1369, 648], [1395, 611], [1417, 577], [1441, 541], [1464, 507]], ['#0000c0', '#4040b8', '#5c5cb8', '#7878b8', '#9494b8']],
  [[[1496, 584], [1495, 561], [1493, 538], [1492, 518], [1490, 494]], [[1477, 592], [1479, 567], [1482, 541], [1483, 521], [1486, 495]], ['#b800b8', '#b848b8', '#b864b8', '#b880b8', '#b89cb8']]
];
sweeps.forEach(([targets]) => targets.forEach(([x, y]) => square(x, y)));
square(1489, 470, '#000');
sweeps.forEach(([, actual, fills]) => actual.forEach(([x, y], i) => dot(x, y, fills[i])));
dot(1489, 473, '#fff');
square(1813, 236);
dot(1802, 193, '#bfbf00');
```
